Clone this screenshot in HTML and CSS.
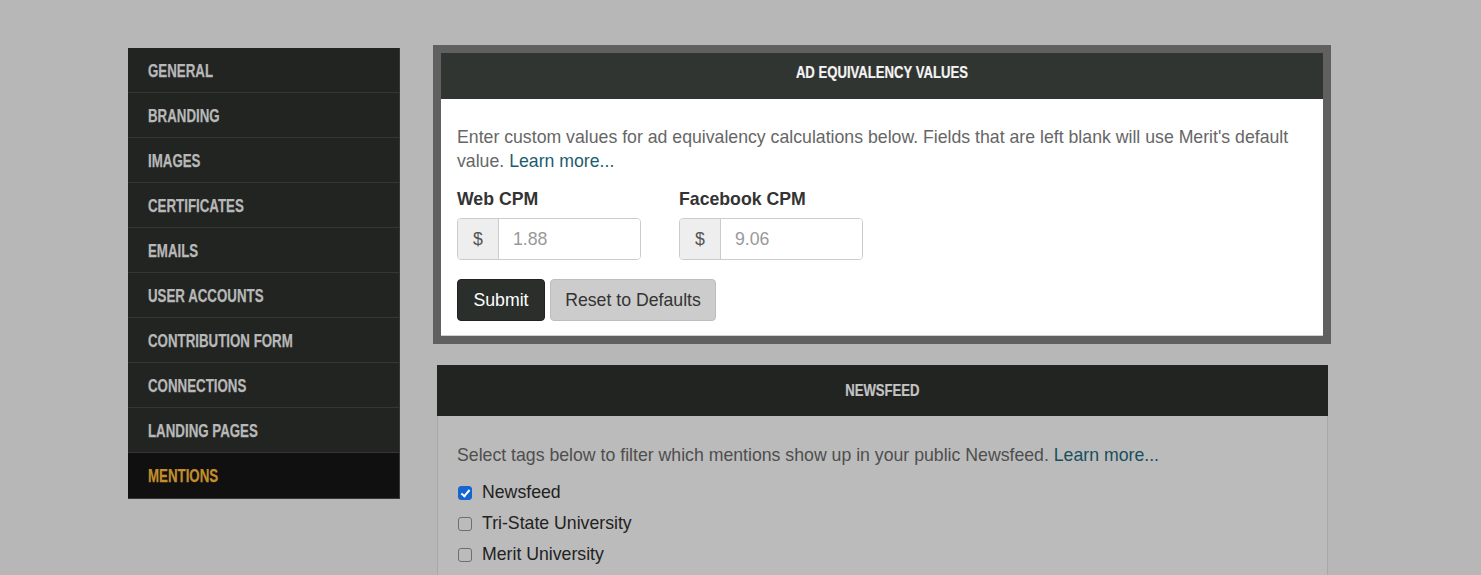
FILE: index.html
```html
<!DOCTYPE html>
<html>
<head>
<meta charset="utf-8">
<title>Settings - Mentions</title>
<link rel="stylesheet" href="styles.css">
</head>
<body>
<div class="page">
  <nav class="sidebar">
    <a class="nav-item"><span class="narrow">GENERAL</span></a>
    <a class="nav-item"><span class="narrow">BRANDING</span></a>
    <a class="nav-item"><span class="narrow">IMAGES</span></a>
    <a class="nav-item"><span class="narrow">CERTIFICATES</span></a>
    <a class="nav-item"><span class="narrow">EMAILS</span></a>
    <a class="nav-item"><span class="narrow">USER ACCOUNTS</span></a>
    <a class="nav-item"><span class="narrow">CONTRIBUTION FORM</span></a>
    <a class="nav-item"><span class="narrow">CONNECTIONS</span></a>
    <a class="nav-item"><span class="narrow">LANDING PAGES</span></a>
    <a class="nav-item active"><span class="narrow">MENTIONS</span></a>
  </nav>
  <main class="content">
    <section class="panel highlight">
      <header class="panel-head ad-head"><span class="narrow-c">AD EQUIVALENCY VALUES</span></header>
      <div class="panel-body ad-body">
        <p class="intro">Enter custom values for ad equivalency calculations below. Fields that are left blank will use Merit's default value. <a class="link">Learn more...</a></p>
        <div class="fields">
          <div class="field">
            <label class="field-label">Web CPM</label>
            <div class="input-group">
              <span class="addon">$</span>
              <input class="input" type="text" placeholder="1.88">
            </div>
          </div>
          <div class="field">
            <label class="field-label">Facebook CPM</label>
            <div class="input-group">
              <span class="addon">$</span>
              <input class="input" type="text" placeholder="9.06">
            </div>
          </div>
        </div>
        <div class="actions">
          <button class="btn btn-dark">Submit</button>
          <button class="btn btn-light">Reset to Defaults</button>
        </div>
      </div>
    </section>
    <section class="panel dimmed">
      <header class="panel-head news-head"><span class="narrow-c">NEWSFEED</span></header>
      <div class="panel-body news-body">
        <p class="intro news-intro">Select tags below to filter which mentions show up in your public Newsfeed. <a class="link">Learn more...</a></p>
        <label class="check-row"><input type="checkbox" class="check" checked><span>Newsfeed</span></label>
        <label class="check-row"><input type="checkbox" class="check"><span>Tri-State University</span></label>
        <label class="check-row"><input type="checkbox" class="check"><span>Merit University</span></label>
      </div>
    </section>
  </main>
</div>
</body>
</html>
```

FILE: styles.css
```css
html, body {
  margin: 0;
  padding: 0;
  background: #b7b7b7;
  overflow: hidden;
  height: 575px;
}
body {
  font-family: "Liberation Sans", Arial, sans-serif;
}
.page {
  display: flex;
  align-items: flex-start;
  padding: 45px 0 0 128px;
}
.sidebar {
  width: 271px;
  margin-top: 3px;
  background: #222422;
  border-right: 1px solid #353735;
  border-bottom: 1px solid #353735;
  display: flex;
  flex-direction: column;
}
.nav-item {
  display: block;
  height: 44px;
  line-height: 47px;
  padding-left: 20px;
  border-bottom: 1px solid #353735;
  font-family: "Liberation Sans", Arial, sans-serif;
  font-weight: bold;
  font-size: 17.5px;
  color: #b8b8b8;
  background: #222422;
  white-space: nowrap;
  -webkit-text-stroke: 0.25px currentColor;
}
.narrow {
  display: inline-block;
  transform: scaleX(0.76);
  transform-origin: left center;
}
.narrow-c {
  display: inline-block;
  transform: scaleX(0.82);
  transform-origin: center center;
}
.nav-item.active {
  background: #101010;
  color: #c38e2b;
  border-bottom: none;
  height: 45px;
}
.content {
  margin-left: 33px;
  width: 898px;
  display: flex;
  flex-direction: column;
}
.panel-head {
  text-align: center;
  font-family: "Liberation Sans", Arial, sans-serif;
  font-weight: bold;
  font-size: 16px;
  white-space: nowrap;
  -webkit-text-stroke: 0.2px currentColor;
}
.highlight {
  border: 8px solid #606060;
  background: #fff;
}
.ad-head {
  background: #313532;
  color: #f4f4f4;
  height: 46px;
  line-height: 40px;
}
.ad-body {
  padding: 26px 16px 14px;
  border-bottom: 1px solid #d0d0d0;
}
.intro {
  margin: 0 0 14px;
  font-size: 17.7px;
  line-height: 24px;
  color: #666;
}
.link {
  color: #1b5d70;
  text-decoration: none;
}
.fields {
  display: flex;
}
.field {
  width: 222px;
  display: flex;
  flex-direction: column;
}
.field-label {
  font-size: 17.7px;
  font-weight: bold;
  line-height: 24px;
  color: #333;
  margin-bottom: 7px;
}
.input-group {
  display: flex;
  width: 184px;
  height: 42px;
  box-sizing: border-box;
  border: 1px solid #ccc;
  border-radius: 4px;
  overflow: hidden;
}
.addon {
  width: 40px;
  background: #eee;
  border-right: 1px solid #ccc;
  display: flex;
  align-items: center;
  justify-content: center;
  font-size: 17.7px;
  color: #555;
}
.input {
  flex: 1;
  min-width: 0;
  border: none;
  outline: none;
  padding: 0 14px;
  font-family: "Liberation Sans", Arial, sans-serif;
  font-size: 17.7px;
  color: #555;
  background: #fff;
}
.input::placeholder {
  color: #999;
}
.actions {
  display: flex;
  gap: 5px;
  margin-top: 19px;
}
.btn {
  height: 42px;
  box-sizing: border-box;
  border-radius: 4px;
  font-family: "Liberation Sans", Arial, sans-serif;
  font-size: 17.7px;
  padding: 0;
  cursor: pointer;
}
.btn-dark {
  width: 88px;
  background: #2b2f2c;
  border: 1px solid #222;
  color: #fff;
}
.btn-light {
  width: 166px;
  background: #ccc;
  border: 1px solid #bdbdbd;
  color: #333;
}
.dimmed {
  margin: 21px 3px 0 4px;
}
.news-head {
  background: #222422;
  color: #c4c4c4;
  height: 51px;
  line-height: 51px;
}
.news-body {
  background: #bbbbbb;
  border-left: 1px solid #a8a8a8;
  border-right: 1px solid #a8a8a8;
  padding: 27px 19px 20px;
}
.news-intro {
  color: #4e4e4e;
  margin-bottom: 10px;
}
.news-intro .link {
  color: #174f5e;
}
.check-row {
  display: flex;
  align-items: center;
  gap: 10px;
  height: 31px;
  font-size: 17.7px;
  color: #222;
}
.check {
  appearance: none;
  -webkit-appearance: none;
  width: 14px;
  height: 14px;
  margin: 0 0 0 1px;
  box-sizing: border-box;
  border: 1px solid #6e6e6e;
  border-radius: 3px;
  background: transparent;
  position: relative;
}
.check:checked {
  background: #1565d0;
  border-color: #1565d0;
}
.check:checked::after {
  content: "";
  position: absolute;
  left: 4px;
  top: 1px;
  width: 3px;
  height: 7px;
  border: solid #fff;
  border-width: 0 2px 2px 0;
  transform: rotate(40deg);
}
```
